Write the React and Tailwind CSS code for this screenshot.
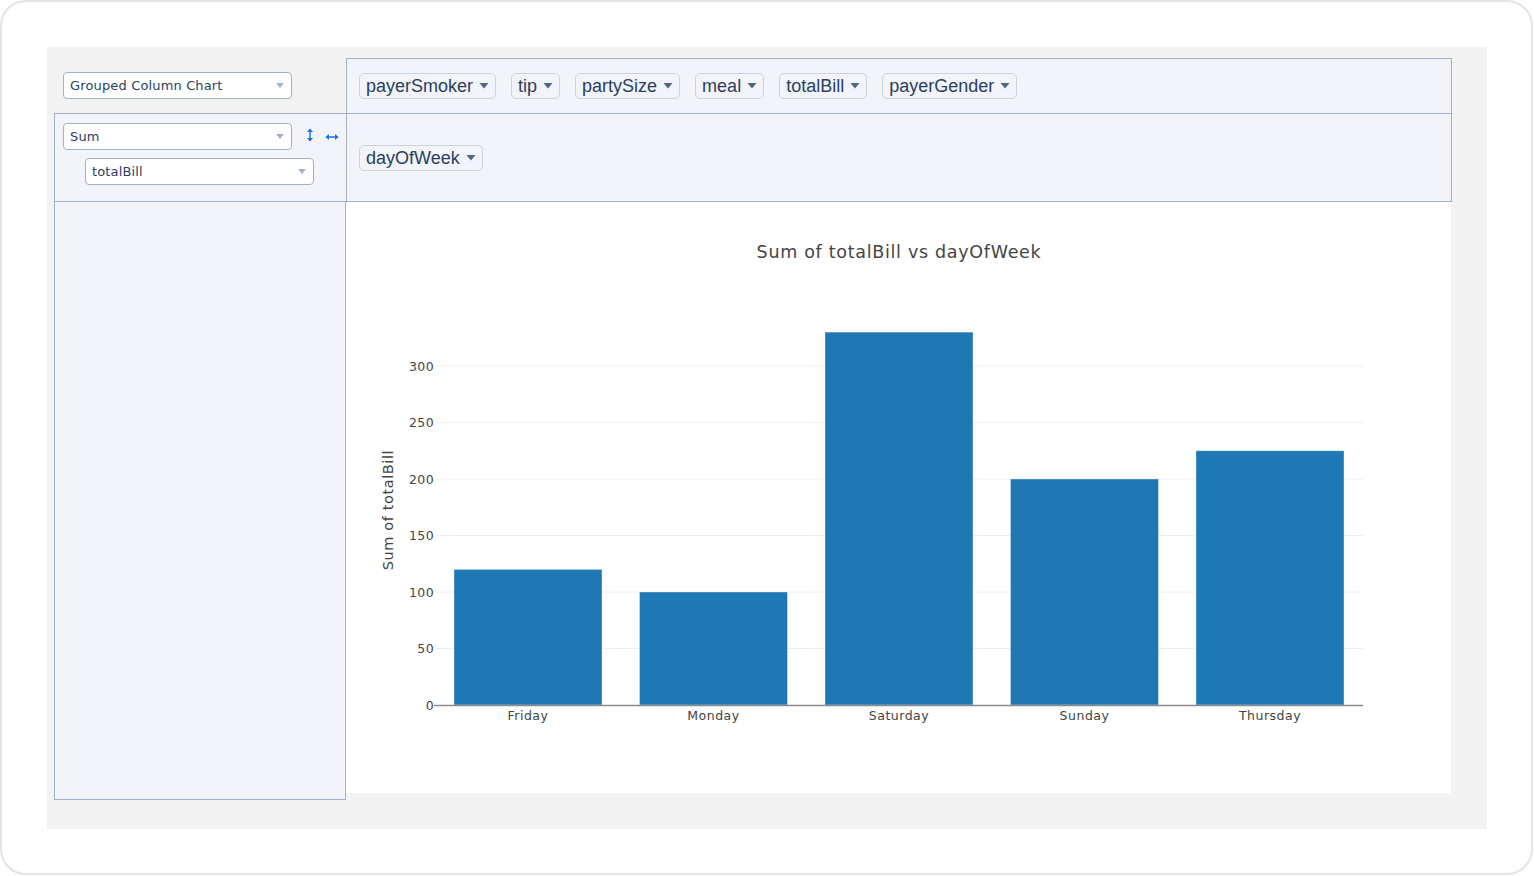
import React from "react";

const unused = ["payerSmoker", "tip", "partySize", "meal", "totalBill", "payerGender"];

const bars = [
  { label: "Friday", value: 120 },
  { label: "Monday", value: 100 },
  { label: "Saturday", value: 330 },
  { label: "Sunday", value: 200 },
  { label: "Thursday", value: 225 },
];

const ticks = [0, 50, 100, 150, 200, 250, 300];

const Pill = ({ name }) => (
  <span className="inline-flex items-center h-[26px] px-[6px] gap-[6px] rounded-[5px] border border-[#c8d4e3] bg-[#f2f4f9] text-[#2a3f5f] text-[18px] font-['Liberation_Sans',Arial,sans-serif] whitespace-nowrap">
    {name}
    <svg width="10" height="6" viewBox="0 0 10 6">
      <path d="M0.5 0 L9.5 0 L5 5.5 Z" fill="#506784" />
    </svg>
  </span>
);

const Select = ({ value, className = "" }) => (
  <div
    className={`flex items-center justify-between w-[229px] h-[27px] pl-[6px] pr-[7px] bg-white border border-[#a2b1c6] rounded-[4px] text-[13px] tracking-[0.15px] text-[#2a3f5f] font-['DejaVu_Sans',Verdana,sans-serif] ${className}`}
  >
    <span>{value}</span>
    <svg width="8" height="5" viewBox="0 0 8 5">
      <path d="M0 0 L8 0 L4 5 Z" fill="#a2b1c6" />
    </svg>
  </div>
);

const Chart = () => {
  const y = (v) => 503 - v * 1.13;
  return (
    <svg width="1105" height="591" className="block font-['DejaVu_Sans',Verdana,sans-serif]">
      <text x="553" y="56" textAnchor="middle" fontSize="17.5" letterSpacing="0.7" fill="#444">
        Sum of totalBill vs dayOfWeek
      </text>
      {ticks.map((t) => (
        <g key={t}>
          {t > 0 && <line x1="90" x2="1017" y1={y(t)} y2={y(t)} stroke="#eeeeee" strokeWidth="1" />}
          <text x="88" y={y(t) + 4.5} textAnchor="end" fontSize="12.5" letterSpacing="0.4" fill="#444">
            {t}
          </text>
        </g>
      ))}
      {bars.map((b, i) => {
        const x = 108 + i * 185.5;
        return (
          <g key={b.label}>
            <rect
              x={x}
              y={y(b.value)}
              width="148"
              height={b.value * 1.13}
              fill="#1f77b4"
              stroke="rgba(255,255,255,0.45)"
              strokeWidth="0.8"
            />
            <text x={x + 74} y="518" textAnchor="middle" fontSize="12.5" letterSpacing="0.5" fill="#444">
              {b.label}
            </text>
          </g>
        );
      })}
      <line x1="88" x2="1017" y1="503.5" y2="503.5" stroke="#8a8a8a" strokeWidth="1.5" />
      <text
        x="0"
        y="0"
        transform="translate(47 308) rotate(-90)"
        textAnchor="middle"
        fontSize="14.5"
        letterSpacing="0.6"
        fill="#444"
      >
        Sum of totalBill
      </text>
    </svg>
  );
};

export default function App() {
  return (
    <div className="w-[1534px] h-[876px] bg-white">
      <div className="w-[1533px] h-[875px] rounded-[26px] border-2 border-[#e1e4e9] pt-[45px] pl-[45px]">
        <div className="w-[1440px] h-[782px] bg-[#f3f3f3] pt-[11px] pl-[7px]">
          <div className="grid grid-cols-[292px_1106px] grid-rows-[55px_89px_598px]">
            {/* renderer */}
            <div className="pt-[14px] pl-[9px]">
              <Select value="Grouped Column Chart" />
            </div>

            {/* unused attrs */}
            <div className="flex items-center gap-[15px] pl-[12px] bg-[#f2f4f9] border-l border-t border-r border-[#a2b1c6]">
              {unused.map((n) => (
                <Pill key={n} name={n} />
              ))}
            </div>

            {/* aggregator */}
            <div className="pt-[9px] pl-[8px] bg-[#f2f4f9] border-l border-t border-b border-[#a2b1c6]">
              <div className="flex items-center">
                <Select value="Sum" />
                <svg width="8" height="14" viewBox="0 0 8 14" className="ml-[14px] -mt-[3px]">
                  <path d="M4 1.5 V12.5" stroke="#1a73e8" strokeWidth="1.5" />
                  <path d="M1 4 L4 0.5 L7 4 Z" fill="#1a73e8" />
                  <path d="M1 10 L4 13.5 L7 10 Z" fill="#1a73e8" />
                </svg>
                <svg width="14" height="8" viewBox="0 0 14 8" className="ml-[11px] mt-[1px]">
                  <path d="M1.5 4 H12.5" stroke="#1a73e8" strokeWidth="1.5" />
                  <path d="M4 1 L0.5 4 L4 7 Z" fill="#1a73e8" />
                  <path d="M10 1 L13.5 4 L10 7 Z" fill="#1a73e8" />
                </svg>
              </div>
              <Select value="totalBill" className="mt-[8px] ml-[22px]" />
            </div>

            {/* col attrs */}
            <div className="pt-[31px] pl-[12px] bg-[#f2f4f9] border border-[#a2b1c6]">
              <Pill name="dayOfWeek" />
            </div>

            {/* row attrs */}
            <div className="bg-[#f2f4f9] border-l border-r border-b border-[#a2b1c6]" />

            {/* output */}
            <div className="self-start h-[591px] w-[1105px] bg-white">
              <Chart />
            </div>
          </div>
        </div>
      </div>
    </div>
  );
}
